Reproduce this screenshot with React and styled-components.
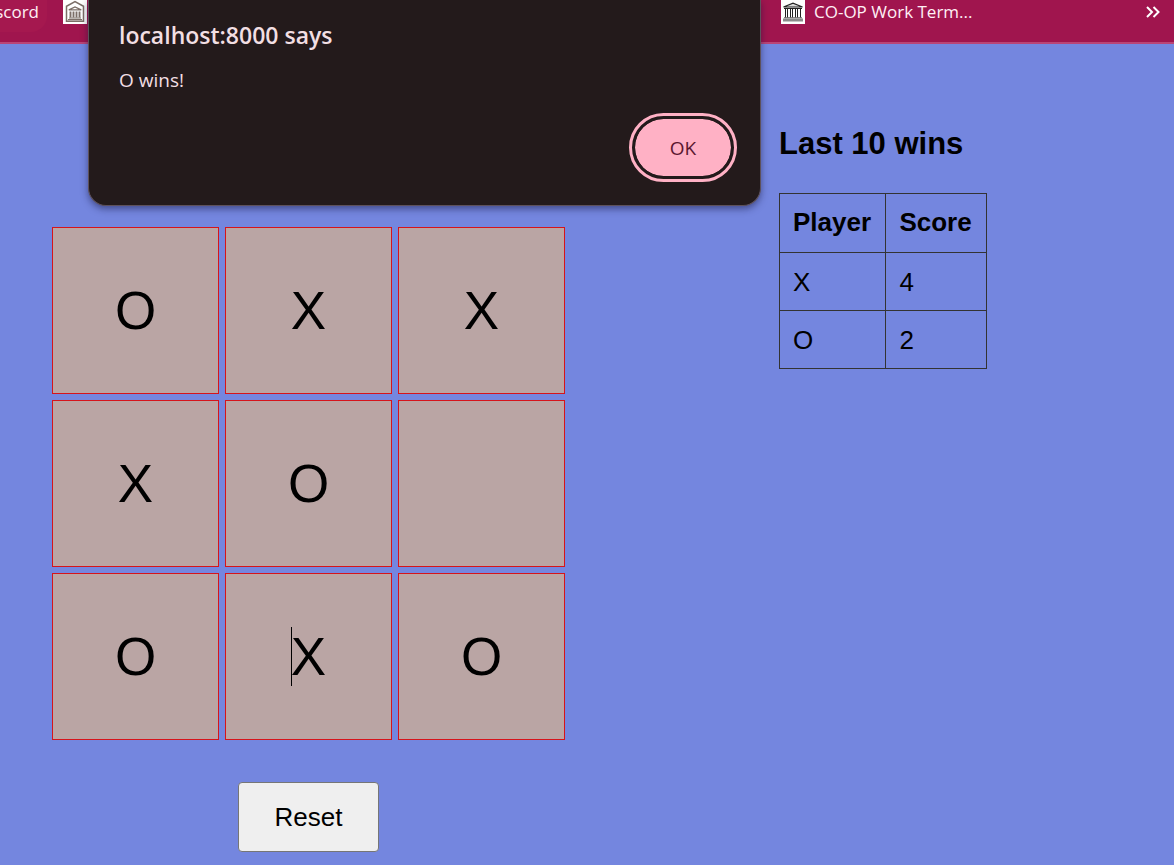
import React from "react";
import styled, { createGlobalStyle, css } from "styled-components";

const GlobalStyle = createGlobalStyle`
  *, *::before, *::after { box-sizing: border-box; }
  body {
    margin: 0;
    min-height: 100vh;
    background: #7486df;
    color: #000;
    font-family: "Liberation Sans", Arial, sans-serif;
    font-size: 26px;
  }
`;

const Page = styled.div`
  position: relative;
  min-height: 100vh;
`;

const BookmarksBar = styled.nav`
  display: flex;
  justify-content: space-between;
  align-items: flex-start;
  height: 44px;
  padding-right: 13px;
  background: #a0154e;
  border-bottom: 2px solid #b94577;
  font-family: "Open Sans", "Noto Sans", sans-serif;
  font-size: 17px;
  line-height: 24px;
`;

const BookmarkGroup = styled.div`
  display: flex;
  gap: 16px;
`;

const Bookmark = styled.a`
  display: flex;
  gap: 9px;
  color: #fff0f5;
  text-decoration: none;
  white-space: nowrap;
`;

const ActiveBookmark = styled(Bookmark)`
  justify-content: flex-end;
  width: 47px;
  height: 32px;
  padding-right: 8px;
  overflow: hidden;
  background: #a5184f;
  border-bottom-right-radius: 16px;
`;

const Favicon = styled.svg`
  display: block;
  width: 24px;
  height: 24px;
  background: #fff;
`;

const TrailingBookmarks = styled.div`
  display: flex;
  justify-content: space-between;
  width: 380px;
`;

const OverflowButton = styled.button`
  padding: 0;
  border: 0;
  background: none;
  color: #fff;
  height: 24px;
`;

const Dialog = styled.section`
  position: absolute;
  top: 0;
  left: 88px;
  width: 673px;
  padding: 19px 24px 23px 30px;
  border: 1px solid #5d515c;
  border-top: 0;
  border-radius: 0 0 18px 18px;
  background: #231a1b;
  color: #f2dfe3;
  box-shadow: 0 3px 7px rgba(20, 20, 60, 0.5);
  font-family: "Open Sans", "Noto Sans", sans-serif;
  font-size: 19px;
  line-height: 24px;
  display: flex;
  flex-direction: column;
`;

const DialogTitle = styled.h1`
  margin: 0 0 17px;
  font-size: 23px;
  font-weight: 600;
  line-height: 32px;
`;

const DialogText = styled.p`
  margin: 0 0 24px;
`;

const OkButton = styled.button`
  align-self: flex-end;
  width: 102px;
  height: 63px;
  margin: 0 2px 3px 0;
  border: 3px solid #231a1b;
  border-radius: 32px;
  outline: 3px solid #ffb1c5;
  background: #ffb1c5;
  background-clip: padding-box;
  color: #5b1730;
  font: 500 19px/24px "Open Sans", "Noto Sans", sans-serif;
`;

const Main = styled.main`
  display: grid;
  grid-template-columns: 1fr 343px;
  padding: 80px 52px 0;
`;

const Game = styled.section`
  display: flex;
  flex-direction: column;
  align-items: center;
  gap: 42px;
  width: 513px;
  padding-top: 103px;
`;

const Board = styled.div`
  display: grid;
  grid-template-columns: repeat(3, 1fr);
  gap: 6px;
  width: 100%;
`;

const Cell = styled.button`
  aspect-ratio: 1;
  padding: 0;
  border: 1px solid #d6141b;
  background: #baa5a4;
  color: #000;
  font: 53px/60px "Liberation Sans", Arial, sans-serif;
`;

const Mark = styled.span`
  position: relative;
  ${(p) =>
    p.$caret &&
    css`
      &::before {
        content: "";
        position: absolute;
        left: 0;
        top: 0;
        width: 1px;
        height: 59px;
        background: #000;
      }
    `}
`;

const ResetButton = styled.button`
  width: 141px;
  height: 70px;
  border: 1px solid #767676;
  border-radius: 4px;
  background: #efefef;
  color: #000;
  font: 26px/30px "Liberation Sans", Arial, sans-serif;
`;

const Heading = styled.h2`
  margin: 0 0 29px;
  font-size: 31px;
  line-height: 40px;
`;

const ScoreTable = styled.table`
  width: 208px;
  border-collapse: collapse;
  line-height: 30px;
`;

const cellStyle = css`
  padding: 14px 13px 13px;
  border: 1px solid #333;
  text-align: left;
`;

const Th = styled.th`
  ${cellStyle}
  padding: 13px 13px 15px;
`;

const Td = styled.td`
  ${cellStyle}
`;

const cells = ["O", "X", "X", "X", "O", "", "O", "X", "O"];
const scores = [
  ["X", 4],
  ["O", 2],
];

function HouseIcon() {
  return (
    <Favicon viewBox="0 0 24 24" fill="none" stroke="#7b6e67" aria-hidden="true">
      <path d="M3.500 21.300V6.300L12 1.600l8.500 4.700v15z" strokeWidth="1.500" />
      <path d="M5.800 9.800 12 7l6.200 2.800z" strokeWidth="1.300" />
      <path d="M7.500 11.500v6M10.500 11.500v6M13.500 11.500v6M16.500 11.500v6" strokeWidth="1.900" />
      <path d="M6 18h12M5 19.700h14" strokeWidth="1.200" />
    </Favicon>
  );
}

function MuseumIcon() {
  return (
    <Favicon viewBox="0 0 24 24" fill="none" stroke="#222" aria-hidden="true">
      <path d="M2.500 7 12 3.200 21.500 7z" strokeWidth="1.200" fill="#ddd" />
      <path d="M3 8.500h18" strokeWidth="1" />
      <path d="M4.500 9v8.500M6.500 9v8.500M9.500 9v8.500M11.500 9v8.500M14.500 9v8.500M16.500 9v8.500M19.500 9v8.500" strokeWidth="1" />
      <path d="M3 17.800h18" strokeWidth="1" stroke="#555" />
      <path d="M2 20h20" strokeWidth="3" stroke="#8a8a8a" />
    </Favicon>
  );
}

export default function App() {
  return (
    <Page>
      <GlobalStyle />
      <BookmarksBar aria-label="Bookmarks">
        <BookmarkGroup>
          <ActiveBookmark href="#discord">scord</ActiveBookmark>
          <Bookmark href="#home" aria-label="Home">
            <HouseIcon />
          </Bookmark>
        </BookmarkGroup>
        <TrailingBookmarks>
          <Bookmark href="#coop">
            <MuseumIcon />
            CO-OP Work Term...
          </Bookmark>
          <OverflowButton aria-label="More bookmarks">
            <svg width="16" height="24" viewBox="0 0 16 24" fill="none" stroke="currentColor" strokeWidth="2">
              <path d="M2 7 7 12 2 17M8.500 7l5 5-5 5" />
            </svg>
          </OverflowButton>
        </TrailingBookmarks>
      </BookmarksBar>

      <Main>
        <Game>
          <Board>
            {cells.map((mark, i) => (
              <Cell key={i} aria-label={mark ? undefined : "Empty square"}>
                <Mark $caret={i === 7}>{mark}</Mark>
              </Cell>
            ))}
          </Board>
          <ResetButton>Reset</ResetButton>
        </Game>
        <section>
          <Heading>Last 10 wins</Heading>
          <ScoreTable>
            <thead>
              <tr>
                <Th scope="col">Player</Th>
                <Th scope="col">Score</Th>
              </tr>
            </thead>
            <tbody>
              {scores.map(([player, score]) => (
                <tr key={player}>
                  <Td>{player}</Td>
                  <Td>{score}</Td>
                </tr>
              ))}
            </tbody>
          </ScoreTable>
        </section>
      </Main>

      <Dialog role="alertdialog" aria-labelledby="alert-title">
        <DialogTitle id="alert-title">localhost:8000 says</DialogTitle>
        <DialogText>O wins!</DialogText>
        <OkButton>OK</OkButton>
      </Dialog>
    </Page>
  );
}
